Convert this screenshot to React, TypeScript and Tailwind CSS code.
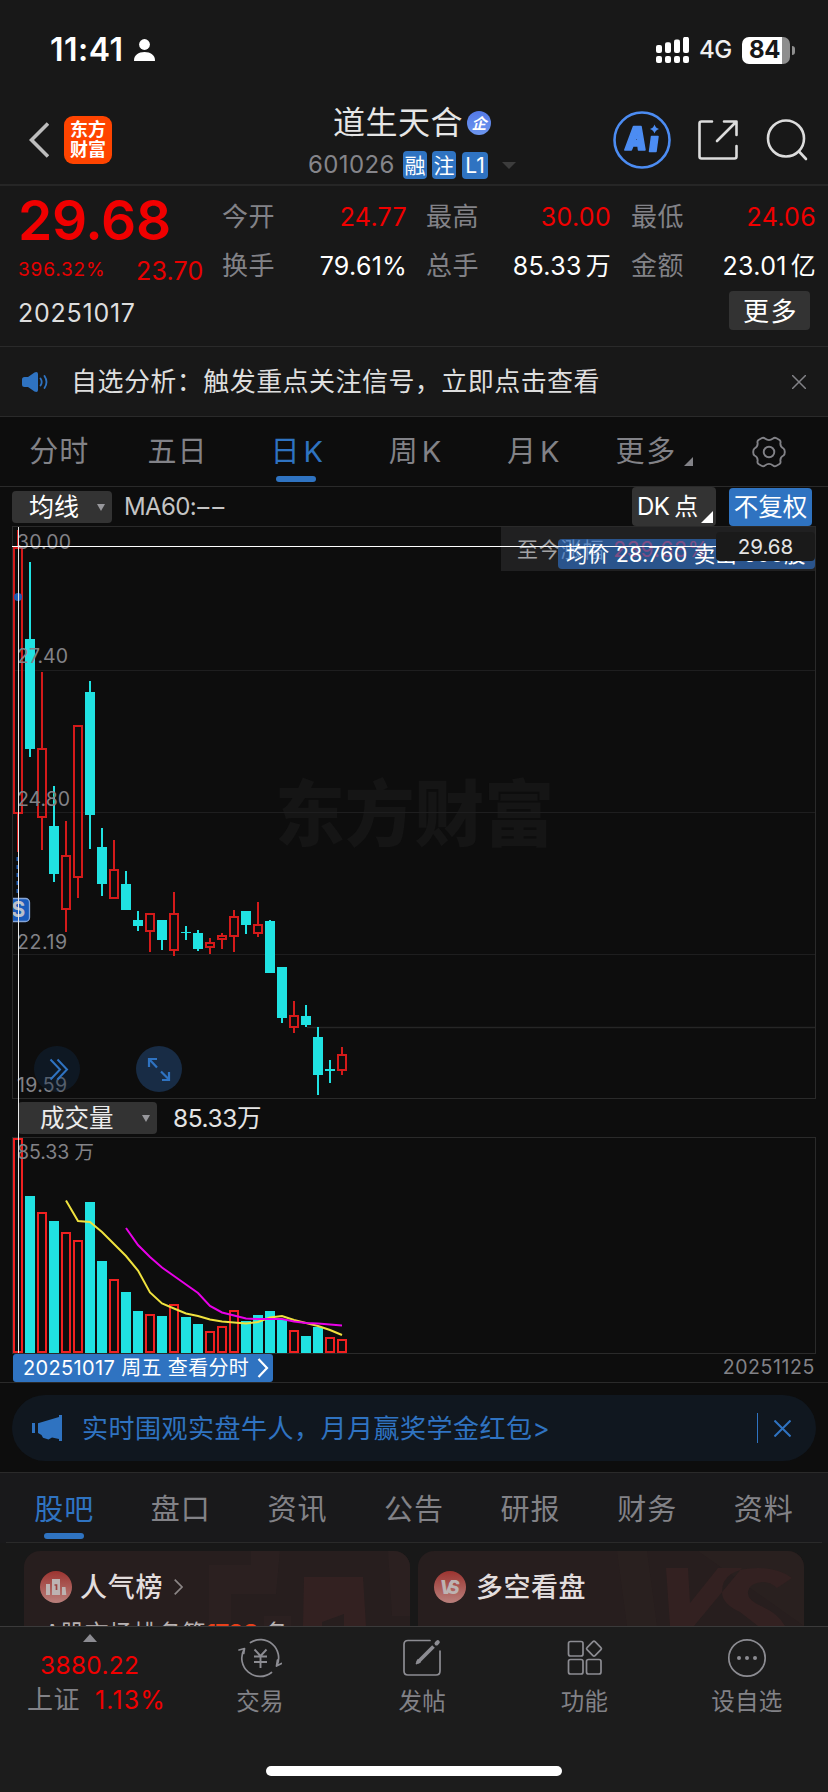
import React from 'react';

type Candle = { up: boolean; high: number; top: number; bottom: number; low: number; vol: number };

const c = (up: boolean, high: number, top: number, bottom: number, low: number, vol: number): Candle => ({
  up, high, top, bottom, low, vol,
});

const candles: Candle[] = [
  c(true, 530, 547, 814, 852, 1138),
  c(false, 562, 639, 749, 757, 1196),
  c(true, 672, 748, 818, 850, 1212),
  c(false, 786, 826, 874, 882, 1221),
  c(true, 821, 855, 910, 932, 1232),
  c(true, 725, 725, 878, 898, 1240),
  c(false, 681, 692, 815, 849, 1202),
  c(false, 828, 847, 884, 896, 1261),
  c(true, 840, 869, 899, 899, 1279),
  c(false, 871, 884, 910, 910, 1292),
  c(false, 911, 920, 926, 931, 1311),
  c(true, 913, 913, 932, 952, 1314),
  c(false, 920, 920, 940, 950, 1316),
  c(true, 892, 913, 951, 956, 1304),
  c(false, 926, 932, 933, 940, 1317),
  c(false, 930, 933, 949, 951, 1324),
  c(true, 938, 942, 948, 954, 1331),
  c(true, 933, 935, 940, 949, 1326),
  c(true, 910, 916, 937, 952, 1310),
  c(false, 911, 911, 925, 934, 1321),
  c(true, 902, 924, 934, 937, 1315),
  c(false, 920, 921, 973, 973, 1311),
  c(false, 967, 967, 1018, 1023, 1319),
  c(true, 1001, 1015, 1028, 1033, 1330),
  c(false, 1005, 1016, 1025, 1027, 1336),
  c(false, 1027, 1037, 1075, 1095, 1327),
  c(false, 1060, 1069, 1071, 1083, 1337),
  c(true, 1047, 1054, 1071, 1075, 1339),
];

const volumeFilled = [false, true, false, true, false, false, true, true, false, true, true, false, true, false, true, true, false, false, false, true, true, true, true, false, true, true, false, false];

const ma5 = [1200.5, 1221, 1222, 1232, 1244, 1256, 1270.5, 1292.5, 1303.5, 1308.5, 1313.5, 1316, 1319.5, 1321.5, 1322.5, 1323.5, 1322, 1317.5, 1316, 1320, 1323, 1326, 1330, 1335];
const ma10 = [1228, 1245, 1257, 1267.5, 1276, 1284.5, 1293, 1306, 1312.5, 1315.5, 1318.5, 1319, 1319, 1319, 1321.5, 1323, 1323.5, 1324.5, 1325.5];

const xAt = (i: number) => 6 + i * 12;
const line = (values: number[], start: number) =>
  values.map((v, i) => `${xAt(start + i)},${v - 1137}`).join(' ');

const axis: [string, number, number][] = [
  ['30.00', 542, 54],
  ['27.40', 656, 51],
  ['24.80', 799, 53],
  ['22.19', 941.7, 50],
  ['19.59', 1084.7, 50],
];

function StatusBar() {
  return (
    <div className="flex h-[100px] items-center pl-[50px] pr-[33px]">
      <span className="w-[84px] whitespace-nowrap text-[32px] font-semibold leading-none tracking-[0.5px] text-white">11:41</span>
      <svg className="h-[22px] w-[21px]" viewBox="0 0 21 22" fill="#fff">
        <circle cx="10.5" cy="5.5" r="5.4" />
        <path d="M0 21.5C0 16 4.5 13 10.5 13S21 16 21 21.5Q21 22 20.500 22H.5Q0 22 0 21.500z" />
      </svg>
      <div className="ml-auto flex items-center">
        <svg className="h-[26px] w-[33px]" viewBox="0 0 33 26" fill="#fff">
          {[0, 9, 18, 27].map((x, i) => (
            <g key={x}>
              <rect x={x} y={8 - i * 2.7} width="6" height={8 + i * 2.7} rx="2" />
              <rect x={x} y="19" width="6" height="7" rx="2" />
            </g>
          ))}
        </svg>
        <span className="ml-[10px] w-[43px] text-[24px] font-medium leading-none tracking-[-0.5px] text-[#f0f0f0]">4G</span>
        <div className="flex h-[27px] w-[48px] items-center rounded-[7px] bg-gradient-to-r from-white from-83% to-[#8e8e8e] to-83% pl-[7px] text-[24px] font-bold leading-none tracking-[-0.4px] text-[#181818]">
          84
        </div>
        <div className="ml-[2px] h-[9px] w-[3px] rounded-r-full bg-[#8e8e8e]" />
      </div>
    </div>
  );
}

function Header() {
  return (
    <div className="flex h-[86px] items-start border-b-2 border-[#262626]">
      <div className="flex w-[270px] items-center pl-[29px] pt-[16px]">
        <svg className="h-[36px] w-[20px]" viewBox="0 0 20 36" fill="none" stroke="#bdbdbd" strokeWidth="3.6">
          <path d="M19 1.500 2.500 18 19 34.500" />
        </svg>
        <div className="ml-[15px] flex h-[48px] w-[48px] flex-col items-center justify-center rounded-[9px] bg-[#ff4400] text-[18px] font-bold leading-[20px] text-white">
          <span>东方</span>
          <span>财富</span>
        </div>
      </div>
      <div className="flex w-[288px] flex-col pl-[38px] pt-[4px]">
        <div className="flex h-[38px] items-center pl-[25px]">
          <span className="whitespace-nowrap text-[32px] leading-[38px] tracking-[0.5px] text-[#e6e6e6]">道生天合</span>
          <span className="ml-[4px] flex h-[24px] w-[24px] items-center justify-center rounded-full bg-gradient-to-b from-[#5479e8] to-[#6d96ee] text-[15px] font-bold leading-none text-white">
            <i>企</i>
          </span>
        </div>
        <div className="mt-[9px] flex h-[28px] items-center">
          <span className="w-[95px] whitespace-nowrap text-[24px] leading-none tracking-[0.4px] text-[#85858a]">601026</span>
          <span className="flex h-[28px] w-[24px] items-center justify-center rounded-[4px] bg-[#2f73c1] text-[21px] leading-none text-white">融</span>
          <span className="ml-[5px] flex h-[28px] w-[24px] items-center justify-center rounded-[4px] bg-[#2f73c1] text-[21px] leading-none text-white">注</span>
          <span className="ml-[6px] flex h-[27px] w-[26px] items-center justify-center rounded-[4px] bg-[#2f73c1] text-[21px] leading-none text-white">L1</span>
          <svg className="ml-[14px] h-[7px] w-[14px]" viewBox="0 0 14 7" fill="#3c3c3c">
            <path d="M0 0h14L7 7z" />
          </svg>
        </div>
      </div>
      <div className="flex flex-1 items-center pl-[55px] pt-[11px]">
        <svg className="h-[58px] w-[58px]" viewBox="0 0 58 58" fill="none">
          <circle cx="29" cy="29" r="27.500" stroke="#4c8cf2" strokeWidth="2.600" />
          <path fill="#4c8cf2" stroke="#4c8cf2" strokeWidth="1.500" strokeLinejoin="round" fillRule="evenodd" d="M20.500 15.500h7.500L32 39h-6.500l-.5-4h-5l-1.700 4H11.800zM22 29.500h2.600l-.5-6z" />
          <path fill="#4c8cf2" stroke="#4c8cf2" strokeWidth="1.500" strokeLinejoin="round" d="M38.500 25.500h6.500L43 40.500h-6.500z" />
          <path fill="#4c8cf2" d="M41.500 13.500q1 3.500 4.500 4.500-3.500 1-4.500 4.500-1-3.500-4.500-4.500 3.500-1 4.500-4.500z" />
        </svg>
        <svg className="ml-[27px] h-[40px] w-[40px]" viewBox="0 0 40 40" fill="none" stroke="#dcdcdc" strokeWidth="2.600" strokeLinecap="round" strokeLinejoin="round">
          <path d="M14 1.500H3.500q-2 0-2 2v33q0 2 2 2h33q2 0 2-2V26" />
          <path d="M26 1.500h12.500V15M38 2 19 21" />
        </svg>
        <svg className="ml-[28px] h-[42px] w-[42px]" viewBox="0 0 42 42" fill="none" stroke="#dcdcdc" strokeWidth="2.600" strokeLinecap="round">
          <circle cx="20" cy="19.500" r="18" />
          <path d="M33 32.500 40 40" />
        </svg>
      </div>
    </div>
  );
}

function Stat({ label, value, unit, red, cls }: { label: string; value: string; unit?: string; red?: boolean; cls: string }) {
  return (
    <div className={`flex h-[48px] items-center justify-between pt-[2px] ${cls}`}>
      <span className="whitespace-nowrap text-[26px] leading-none tracking-[0.4px] text-[#828287]">{label}</span>
      <span className={`whitespace-nowrap text-[25px] leading-none tracking-[0.3px] ${red ? 'text-[#f00000]' : 'text-white'}`}>
        {value}
        {unit && <span className="ml-[4px]">{unit}</span>}
      </span>
    </div>
  );
}

function Quote() {
  return (
    <div className="flex h-[161px] flex-col border-b border-[#2a2a2a] pt-[6px]">
      <div className="flex h-[98px]">
        <div className="flex w-[222px] flex-col pl-[18px]">
          <span className="h-[56px] text-[55px] font-semibold leading-[56px] tracking-[-0.3px] text-[#f00000]">29.68</span>
          <div className="flex h-[44px] items-center text-[#e80000]">
            <span className="w-[118px] whitespace-nowrap text-[19px] leading-[19px] tracking-[0.85px]">396.32%</span>
            <span className="mt-[5px] whitespace-nowrap text-[25px] leading-none tracking-[0.2px]">23.70</span>
          </div>
        </div>
        <div className="grid w-[594px] grid-cols-[185px_204px_205px] grid-rows-2">
          <Stat label="今开" value="24.77" red cls="" />
          <Stat label="最高" value="30.00" red cls="pl-[19px]" />
          <Stat label="最低" value="24.06" red cls="pl-[20px]" />
          <Stat label="换手" value="79.61%" cls="" />
          <Stat label="总手" value="85.33" unit="万" cls="pl-[19px]" />
          <Stat label="金额" value="23.01" unit="亿" cls="pl-[20px]" />
        </div>
      </div>
      <div className="flex h-[44px] items-center justify-between pl-[18px] pr-[18px]">
        <span className="pt-[2px] text-[25px] leading-none tracking-[0.75px] text-[#dedede]">20251017</span>
        <span className="mb-[3px] flex h-[39px] w-[81px] items-center justify-center rounded-[4px] bg-[#333333] pl-[2px] pt-[2px] text-[26px] leading-none tracking-[1.5px] text-white">更多</span>
      </div>
    </div>
  );
}

function Notice() {
  return (
    <div className="flex h-[70px] items-center border-b border-[#2a2a2a] pl-[22px] pr-[22px]">
      <svg className="h-[20px] w-[27px]" viewBox="0 0 27 20" fill="none" stroke="#2f73c1" strokeWidth="1.800" strokeLinecap="round">
        <path fill="#2f73c1" stroke="none" d="M2.500 5H6l6.500-4.600Q16 -.8 16 2v16q0 2.800-3.500 1.600L6 15H2.500Q0 15 0 12.500v-5Q0 5 2.500 5z" />
        <path d="M18.500 6.500q2.400 3.500 0 7M22.500 4q4 6 0 12" />
      </svg>
      <span className="ml-[22px] whitespace-nowrap text-[26px] leading-none tracking-[0.45px] text-[#dedede]">自选分析：触发重点关注信号，立即点击查看</span>
      <svg className="ml-auto h-[14px] w-[14px]" viewBox="0 0 14 14" stroke="#828287" strokeWidth="1.500">
        <path d="M0 0 14 14M14 0 0 14" />
      </svg>
    </div>
  );
}

function PeriodTabs() {
  const tabs = [['分时', ''], ['五日', ''], ['日', 'K'], ['周', 'K'], ['月', 'K']];
  return (
    <div className="grid h-[70px] grid-cols-7 border-b border-[#2a2a2a] bg-[#0d0d0d]">
      {tabs.map(([t, k], i) => (
        <div key={t} className={`relative flex items-center justify-center whitespace-nowrap text-[29px] leading-none tracking-[1px] ${i === 2 ? 'pl-[3px] text-[#2f73c1]' : i > 2 ? 'pl-[3px] text-[#828287]' : 'text-[#828287]'}`}>
          {t}
          {k && <span className="ml-[3px]">{k}</span>}
          {i === 2 && <div className="absolute bottom-[4px] left-[39px] h-[6px] w-[40px] rounded-full bg-[#2f73c1]" />}
        </div>
      ))}
      <div className="flex items-center pl-[24px] text-[29px] leading-none tracking-[1.8px] text-[#828287]">
        更多
        <svg className="ml-[7px] mt-[20px] h-[9px] w-[9px]" viewBox="0 0 9 9" fill="#828287">
          <path d="M9 0v9H0z" />
        </svg>
      </div>
      <div className="flex items-center justify-center">
        <svg className="h-[32px] w-[34px]" viewBox="0 0 34 32" fill="none" stroke="#828287" strokeWidth="1.900" strokeLinejoin="round">
          <path d="M13 2.600Q17 5.600 21 2.600Q22.500 1 24.500 2.200L27.500 4Q29 5.200 28.400 7Q28 11 31.500 12.500Q32.800 13.500 32.800 16T31.500 19.500Q28 21 28.400 25Q29 26.800 27.500 28L24.500 29.800Q22.500 31 21 29.400Q17 26.400 13 29.400Q11.500 31 9.500 29.800L6.500 28Q5 26.800 5.600 25Q6 21 2.500 19.500Q1.200 18.500 1.200 16T2.500 12.500Q6 11 5.600 7Q5 5.200 6.500 4L9.500 2.200Q11.500 1 13 2.600z" />
          <circle cx="17" cy="16" r="5.300" />
        </svg>
      </div>
    </div>
  );
}

function IndicatorRow() {
  return (
    <div className="flex h-[39px] items-center pl-[12px] pr-[16px]">
      <div className="flex h-[32px] w-[100px] items-center rounded-[4px] bg-[#333333] pl-[17px] pt-[1px] text-[25px] leading-none text-white">
        均线
        <svg className="ml-[18px] h-[7px] w-[8px]" viewBox="0 0 8 7" fill="#98989c">
          <path d="M0 0h8L4 7z" />
        </svg>
      </div>
      <span className="ml-[12px] whitespace-nowrap pt-[1px] text-[24px] leading-none tracking-[-0.6px] text-[#c4c4c4]">
        MA60:<span className="inline-flex gap-[3px] pl-[1px]"><span className="w-[12px]">–</span><span className="w-[12px]">–</span></span>
      </span>
      <div className="ml-auto flex h-[39px] w-[84px] items-center rounded-[4px] bg-[#333333] pl-[5px] pt-[1px] text-[24px] leading-none tracking-[-0.6px] text-white">
        DK<span className="ml-[5px]">点</span>
        <svg className="ml-[3px] mt-[20px] h-[12px] w-[12px] shrink-0" viewBox="0 0 12 12" fill="#fff">
          <path d="M12 0v12H0z" />
        </svg>
      </div>
      <div className="ml-[13px] flex h-[38px] w-[83px] items-center justify-center whitespace-nowrap rounded-[4px] bg-[#2f73c1] pt-[1px] text-[24.500px] leading-none text-white">不复权</div>
    </div>
  );
}

function PriceChart() {
  return (
    <div className="relative h-[573px] w-[804px] border border-[#2a2a2a]">
      <svg className="block h-[571px] w-[802px] font-[Inter,'Noto_Sans_CJK_SC',sans-serif]" viewBox="13 527 802 571">
        <text x="275" y="840" textLength="279" lengthAdjust="spacingAndGlyphs" fontSize="72" fontWeight="900" fill="#151515">东方财富</text>
        {[670.5, 812.5, 954.5].map((y) => (
          <line key={y} x1="13" x2="815" y1={y} y2={y} stroke="#1e1e1f" />
        ))}
        <line x1="307" x2="815" y1="1027.500" y2="1027.500" stroke="#262626" strokeWidth="1.500" />
        <line x1="17.500" x2="17.500" y1="857" y2="896" stroke="#1d5cb5" strokeWidth="2" strokeDasharray="4 4" />
        {candles.map((k, i) => {
          const x = 18 + i * 12;
          return k.up ? (
            <g key={i} stroke="#d41a1a" strokeWidth="2" fill="none">
              <path d={`M${x} ${k.high}V${k.top}M${x} ${k.bottom}V${k.low}`} />
              <rect x={x - 4} y={k.top + 1} width="8" height={k.bottom - k.top - 2} />
            </g>
          ) : (
            <g key={i} fill="#20e2e2">
              <rect x={x - 1} y={k.high} width="2" height={k.low - k.high} />
              <rect x={x - 5} y={k.top} width="10" height={k.bottom - k.top} />
            </g>
          );
        })}
        <circle cx="18" cy="597" r="4" fill="#1d5cb5" />
        <rect x="7" y="898.500" width="22.500" height="23" rx="4" fill="#1a5bbb" stroke="#86a5d6" strokeWidth="1.300" />
        <text x="11.500" y="917" fontSize="21" fontWeight="700" fill="#b9bfca">S</text>
        {axis.map(([t, y, w]) => (
          <text key={t} x="17" y={y + 7} textLength={w} fontSize="19.500" fill="#828287">{t}</text>
        ))}
        <circle cx="57" cy="1069" r="23" fill="#122a45" fillOpacity=".4" />
        <path d="M50.500 1059.500 60 1069.500 50.500 1079.500M57.500 1059.500 67 1069.500 57.500 1079.500" fill="none" stroke="#2f73c1" strokeWidth="2" />
        <circle cx="159" cy="1069" r="23" fill="#182c45" />
        <path d="M149 1067V1059H157M149.500 1059.500 157 1067.500M162 1080H169V1072M161 1071.500 168.500 1079" fill="none" stroke="#2f73c1" strokeWidth="2.200" />
      </svg>
      <div className="absolute left-[488px] top-0 flex h-[44px] w-[314px] items-center bg-[#202021] pl-[16px] text-[21px] leading-none">
        <span className="whitespace-nowrap tracking-[0.8px] text-[#a2a2a4]">至今涨幅</span>
        <span className="ml-[9px] tracking-[0.8px] text-[#f01010]">239.63%</span>
      </div>
      <div className="absolute left-[545px] top-[12px] flex h-[30px] w-[257px] items-center whitespace-nowrap rounded-[4px] bg-[#3278d3]/60 pl-[8px] pt-[2px] text-[21.500px] leading-none tracking-[0.2px] text-white">
        均价 28.760 卖出 500股
      </div>
      <div className="absolute left-[-1px] top-[19px] h-px w-[705px] bg-white" />
      <div className="absolute left-[703px] top-[5px] flex h-[29px] w-[99px] items-center justify-center rounded-[4px] bg-[#1a1a1a] pt-[1px] text-[20.500px] leading-none text-[#e4e4e4]">29.68</div>
    </div>
  );
}

function VolumeSection() {
  return (
    <>
      <div className="flex h-[38px] items-center pl-[6px]">
        <div className="flex h-[32px] w-[139px] items-center rounded-[4px] bg-[#333333] pl-[22px] pt-[1px] text-[24.500px] leading-none text-[#ececec]">
          成交量
          <svg className="ml-[28px] h-[7px] w-[8px]" viewBox="0 0 8 7" fill="#98989c">
            <path d="M0 0h8L4 7z" />
          </svg>
        </div>
        <span className="ml-[16px] pt-[1px] text-[24.500px] leading-none tracking-[-0.4px] text-[#e4e4e4]">85.33万</span>
      </div>
      <div className="h-[217px] w-[804px] border border-[#2a2a2a]">
        <svg className="block h-[215px] w-[802px] font-[Inter,'Noto_Sans_CJK_SC',sans-serif]" viewBox="1 1 802 215">
          {candles.map((k, i) => {
            const y = k.vol - 1137;
            return volumeFilled[i] ? (
              <rect key={i} x={xAt(i) - 5} y={y} width="10" height={216 - y} fill="#20e2e2" />
            ) : (
              <rect key={i} x={xAt(i) - 4} y={y + 1} width="8" height={214 - y} fill="none" stroke="#f02020" strokeWidth="2" />
            );
          })}
          <text x="5" y="22" textLength="77" fontSize="19.500" fill="#828287">85.33 万</text>
          <polyline points={line(ma5, 4)} fill="none" stroke="#efe23e" strokeWidth="2" />
          <polyline points={line(ma10, 9)} fill="none" stroke="#e800e8" strokeWidth="2" />
        </svg>
      </div>
    </>
  );
}

function Chart() {
  return (
    <div className="h-[896px] border-b border-[#2a2a2a] bg-[#0d0d0d]">
      <IndicatorRow />
      <div className="relative ml-[12px] w-[804px]">
        <PriceChart />
        <VolumeSection />
        <div className="absolute left-[6px] top-[1px] h-[826px] w-px bg-[#e8e8e8]" />
      </div>
      <div className="flex h-[28px] justify-between pl-[13px] pr-[13px]">
        <div className="flex h-[28px] w-[260px] items-center whitespace-nowrap rounded-[3px] bg-[#2f73c1] pl-[10px] text-[20px] leading-none tracking-[0.35px] text-white">
          20251017 周五 查看分时
          <svg className="ml-auto mr-[4px] h-[20px] w-[12px]" viewBox="0 0 12 20" fill="none" stroke="#fff" strokeWidth="2.200">
            <path d="M1.500 1 10 10 1.500 19" />
          </svg>
        </div>
        <span className="text-[19.500px] leading-[26px] tracking-[0.6px] text-[#828287]">20251125</span>
      </div>
    </div>
  );
}

function Banner() {
  return (
    <div className="h-[90px] border-b border-[#2a2a2a] bg-[#0d0d0d] px-[12px] pt-[12px]">
      <div className="flex h-[66px] items-center rounded-full bg-[#10171f] pl-[20px] pr-[25px] text-[#2f73c1]">
        <svg className="h-[26px] w-[30px]" viewBox="0 0 30 26" fill="currentColor">
          <path d="M0 8h3v10H0zM6 8.300 27 2V0h3v26h-3v-2l-7-1.500-3.500 2-5.500-1.800-1.500-2.700L6 18z" />
        </svg>
        <span className="ml-[20px] whitespace-nowrap pt-[1px] text-[26px] leading-none tracking-[0.5px]">实时围观实盘牛人，月月赢奖学金红包&gt;</span>
        <div className="ml-auto h-[30px] w-px bg-[#2f73c1]" />
        <svg className="ml-[16px] h-[17px] w-[17px]" viewBox="0 0 17 17" stroke="currentColor" strokeWidth="2">
          <path d="M.5 .5 16.500 16.500M16.500 .5 .5 16.500" />
        </svg>
      </div>
    </div>
  );
}

function SectionTabs() {
  return (
    <div className="h-[70px] bg-[#19191b] px-[6px]">
      <div className="grid h-[70px] grid-cols-7 border-b border-[#2a2a2a]">
        {['股吧', '盘口', '资讯', '公告', '研报', '财务', '资料'].map((t, i) => (
          <div key={t} className={`relative flex items-center justify-center pt-[3px] text-[29px] leading-none tracking-[1px] ${i === 0 ? 'text-[#2f73c1]' : 'text-[#828287]'}`}>
            {t}
            {i === 0 && <div className="absolute bottom-[3px] left-[38px] h-[6px] w-[40px] rounded-full bg-[#2f73c1]" />}
          </div>
        ))}
      </div>
    </div>
  );
}

function Cards() {
  return (
    <div className="flex h-[83px] gap-[8px] overflow-hidden pl-[24px] pt-[8px]">
      <div className="relative h-[160px] w-[386px] shrink-0 overflow-hidden rounded-[16px] bg-[#271e1e] pl-[16px] pt-[20px]">
        <svg className="absolute left-0 top-0 h-[75px] w-[386px]" viewBox="0 0 386 75">
          <path fill="#2b2020" d="M185 14h42V0h29l-4 43h-45v32h-22zM364 0h22v65h-18zM240 65h27v10h-27z" />
          <path fill="#332121" d="M280 26h59l3 49h-22V63l-22 8v4h-19z" />
        </svg>
        <div className="relative flex h-[32px] items-center">
          <svg className="h-[32px] w-[32px]" viewBox="0 0 32 32">
            <defs>
              <linearGradient id="rank" x1="0" y1="0" x2="0" y2="1">
                <stop stopColor="#9c3430" />
                <stop offset="1" stopColor="#b9807c" />
              </linearGradient>
            </defs>
            <circle cx="16" cy="16" r="16" fill="url(#rank)" />
            <path fill="#bdb3b2" d="M6 13h4v11H6zM12 8h8v16h-8zM22 16h3.500l.8 8H22z" />
            <path d="M14.500 14h2v5" fill="none" stroke="#9b4340" strokeWidth="1.700" />
          </svg>
          <span className="ml-[8px] text-[27px] font-medium leading-none tracking-[0.7px] text-[#e2dddd]">人气榜</span>
          <svg className="ml-[11px] h-[16px] w-[9px]" viewBox="0 0 9 16" fill="none" stroke="#8b8585" strokeWidth="1.700">
            <path d="M.7 .7 8 8 .7 15.300" />
          </svg>
        </div>
        <div className="relative mt-[17px] flex h-[28px] items-center whitespace-nowrap pl-[4px] text-[24px] leading-none tracking-[0.2px] text-[#b8b2b2]">
          <span className="pr-[1px] tracking-[-1px]">A</span>股市场排名第<span className="mr-[6px] font-bold tracking-[-0.8px] text-[#e8401a]">1798</span>名
        </div>
      </div>
      <div className="relative h-[160px] w-[386px] shrink-0 overflow-hidden rounded-[16px] bg-[#271e1e] pl-[16px] pt-[20px]">
        <svg className="absolute left-0 top-0 h-[75px] w-[386px]" viewBox="0 0 386 75">
          <path fill="#2c2120" d="M199 0h30l10 75h-30zM280 0h106v75z" opacity=".6" />
          <path fill="#332121" d="M248 17h22l2 35 28-35h24l-48 58h-24zM374 27Q360 17 340 17q-36 0-36 24 0 12 18 20l18 14h27q-6-12-24-20-14-6-13-14 1-9 15-10 8 0 14 6z" />
        </svg>
        <div className="relative flex h-[32px] items-center">
          <svg className="h-[32px] w-[32px]" viewBox="0 0 32 32">
            <circle cx="16" cy="16" r="16" fill="url(#rank)" />
            <text x="5.500" y="23" fontFamily="Inter" fontSize="18.500" fontWeight="800" fontStyle="italic" textLength="20" fill="#bdb3b2">VS</text>
          </svg>
          <span className="ml-[10px] text-[27px] font-medium leading-none tracking-[0.5px] text-[#e2dddd]">多空看盘</span>
        </div>
      </div>
    </div>
  );
}

function NavItem({ label, children }: { label: string; children: React.ReactNode }) {
  return (
    <div className="flex w-[162.400px] flex-col items-center pt-[11px]">
      <svg className="h-[40px] w-[44px]" viewBox="0 0 44 40" fill="none" stroke="#8c8c92" strokeWidth="1.700" strokeLinecap="round" strokeLinejoin="round">
        {children}
      </svg>
      <span className="mt-[11px] whitespace-nowrap text-[23.500px] leading-[26px] tracking-[0.3px] text-[#828287]">{label}</span>
    </div>
  );
}

function BottomBar() {
  return (
    <div className="flex h-[166px] flex-col border-t border-[#3a3a3a] bg-[#1c1c1c]">
      <div className="flex h-[139px] pl-[17px]">
        <div className="flex w-[162px] flex-col pt-[7px]">
          <svg className="ml-[66px] h-[8px] w-[14px]" viewBox="0 0 14 8" fill="#8c8c92">
            <path d="M7 0 14 8H0z" />
          </svg>
          <span className="ml-[23px] mt-[8px] text-[24.500px] leading-[30px] tracking-[0.3px] text-[#f00000]">3880.22</span>
          <div className="ml-[10px] mt-[4px] flex items-center leading-[32px]">
            <span className="w-[68px] text-[26px] tracking-[0.4px] text-[#828287]">上证</span>
            <span className="text-[25px] tracking-[1.1px] text-[#f00000]">1.13%</span>
          </div>
        </div>
        <NavItem label="交易">
          <path d="M12.500 4.500A18.300 18.300 0 0 1 39 27.500M38.500 28l1-6M38.500 28l5-2.500M33.500 34.500A18.300 18.300 0 0 1 6 11.500M6.500 10.500l-5.500 1.500M6.500 10.500l-.8 5" />
          <path d="M16.500 11.500 22.500 18 28.500 11.500M16 18.500H29M16 24H29M22.500 18.500V30" strokeWidth="1.900" strokeLinecap="butt" />
        </NavItem>
        <NavItem label="发帖">
          <path d="M30 2.500H8Q4 2.500 4 6.500V33Q4 37 8 37H36Q40 37 40 33V13" />
          <path d="M17.500 24.500 33.500 8.500" strokeWidth="3.800" strokeLinecap="butt" />
          <path d="M36.500 5.500 37.800 4.200" strokeWidth="4" />
          <path d="M16.500 25.500 18 22 20 24z" fill="#8c8c92" />
        </NavItem>
        <NavItem label="功能">
          <rect x="5.500" y="3.500" width="14.500" height="14.500" rx="2" />
          <rect x="5.500" y="21.500" width="14.500" height="14.500" rx="2" />
          <rect x="23.500" y="21.500" width="14.500" height="14.500" rx="2" />
          <rect x="25.300" y="5" width="11.300" height="11.300" rx="1.500" transform="rotate(45 31 10.700)" />
        </NavItem>
        <NavItem label="设自选">
          <circle cx="22" cy="20" r="18.200" />
          <g fill="#8c8c92" stroke="none">
            <circle cx="14" cy="20" r="2" />
            <circle cx="22" cy="20" r="2" />
            <circle cx="30" cy="20" r="2" />
          </g>
        </NavItem>
      </div>
      <div className="ml-[266px] h-[10px] w-[296px] rounded-full bg-white" />
    </div>
  );
}

export default function App() {
  return (
    <div className="flex h-[1792px] w-[828px] flex-col overflow-hidden bg-[#181818] font-[Inter,'Noto_Sans_CJK_SC',sans-serif]">
      <StatusBar />
      <Header />
      <Quote />
      <Notice />
      <PeriodTabs />
      <Chart />
      <Banner />
      <SectionTabs />
      <Cards />
      <BottomBar />
    </div>
  );
}
